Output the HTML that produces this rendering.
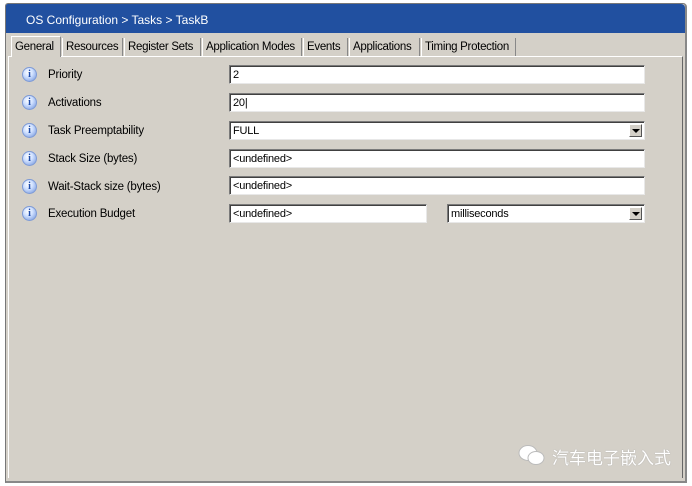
<!DOCTYPE html>
<html><head><meta charset="utf-8"><style>
body{margin:0;width:692px;height:486px;background:#fff;position:relative;overflow:hidden;font-family:"Liberation Sans",Arial,sans-serif;font-size:11px;color:#000}
.win{position:absolute;left:5px;top:3px;width:679px;height:477px;background:#d4d0c8;border:1px solid #777;border-right:2px solid #888;border-bottom:2px solid #888;border-radius:3px 4px 0 0}
.title{position:absolute;left:6px;top:4px;width:679px;height:29px;background:#2150a0;color:#fff;font-size:12px;line-height:33px;border-radius:2px 4px 0 0}
.title span{margin-left:20px}
.tab{position:absolute;top:38px;height:18px;line-height:19px;border-right:1px solid #888;border-left:1px solid #fff;padding:0 3px;font-size:11.5px;letter-spacing:-0.3px}
.tab.sel{top:36px;height:20px;line-height:20px;background:#d4d0c8;border-top:1px solid #fff;z-index:2}
.panel{position:absolute;left:8px;top:56px;width:673px;height:421px;border-top:1px solid #fff;border-left:1px solid #fff;border-right:1px solid #666}
.lbl{position:absolute;left:48px;font-size:11.5px;letter-spacing:-0.2px}
.ic{position:absolute;left:22px;width:13px;height:13px;border-radius:50%;background:radial-gradient(circle at 40% 35%,#fff 0,#cfe0ff 40%,#6b8fd8 100%);border:1px solid #7d9ad6;color:#1d4aa8;font:bold 10px/13px "Liberation Serif",serif;text-align:center}
.inp{position:absolute;background:#fff;border:1px solid #7a7a7a;border-right-color:#e8e8e8;border-bottom-color:#e8e8e8;box-shadow:inset 1px 1px 0 #404040;font-size:11px;line-height:19px;padding-left:3px;box-sizing:border-box;height:19px;letter-spacing:-0.2px}
.dd{position:absolute;right:2px;top:2px;width:13px;height:13px;background:#d4d0c8;border:1px solid #fff;border-right-color:#555;border-bottom-color:#555;box-sizing:border-box}
.dd:after{content:"";position:absolute;left:2px;top:4px;border-left:4px solid transparent;border-right:4px solid transparent;border-top:4px solid #000}
.wm{position:absolute;top:444px;color:#fff;font-size:17px;font-family:"Liberation Sans","Noto Sans CJK SC",sans-serif;text-shadow:0 0 1px #999}
</style></head><body>
<div class="win"></div>
<div class="title"><span>OS Configuration &gt; Tasks &gt; TaskB</span></div>
<div class="panel"></div>
<div class="tab sel" style="left:11px;width:42px">General</div>
<div class="tab" style="left:62px;width:53px">Resources</div>
<div class="tab" style="left:124px;width:69px">Register Sets</div>
<div class="tab" style="left:202px;width:92px">Application Modes</div>
<div class="tab" style="left:303px;width:37px">Events</div>
<div class="tab" style="left:349px;width:63px">Applications</div>
<div class="tab" style="left:421px;width:87px">Timing Protection</div>

<div class="ic" style="top:67px">i</div><div class="lbl" style="top:69px">Priority</div>
<div class="ic" style="top:95px">i</div><div class="lbl" style="top:97px">Activations</div>
<div class="ic" style="top:123px">i</div><div class="lbl" style="top:125px">Task Preemptability</div>
<div class="ic" style="top:151px">i</div><div class="lbl" style="top:153px">Stack Size (bytes)</div>
<div class="ic" style="top:179px">i</div><div class="lbl" style="top:181px">Wait-Stack size (bytes)</div>
<div class="ic" style="top:206px">i</div><div class="lbl" style="top:208px">Execution Budget</div>

<div class="inp" style="left:229px;top:65px;width:416px">2</div>
<div class="inp" style="left:229px;top:93px;width:416px">20|</div>
<div class="inp" style="left:229px;top:121px;width:416px">FULL<div class="dd"></div></div>
<div class="inp" style="left:229px;top:149px;width:416px">&lt;undefined&gt;</div>
<div class="inp" style="left:229px;top:176px;width:416px">&lt;undefined&gt;</div>
<div class="inp" style="left:229px;top:204px;width:198px">&lt;undefined&gt;</div>
<div class="inp" style="left:447px;top:204px;width:198px">milliseconds<div class="dd"></div></div>

<svg style="position:absolute;left:518px;top:444px" width="30" height="22"><ellipse cx="10" cy="9" rx="9" ry="7.5" fill="#fff" stroke="#bbb"/><ellipse cx="18" cy="14" rx="8" ry="6.5" fill="#fff" stroke="#bbb"/></svg>
<div class="wm" style="left:552px">汽车电子嵌入式</div>
</body></html>
